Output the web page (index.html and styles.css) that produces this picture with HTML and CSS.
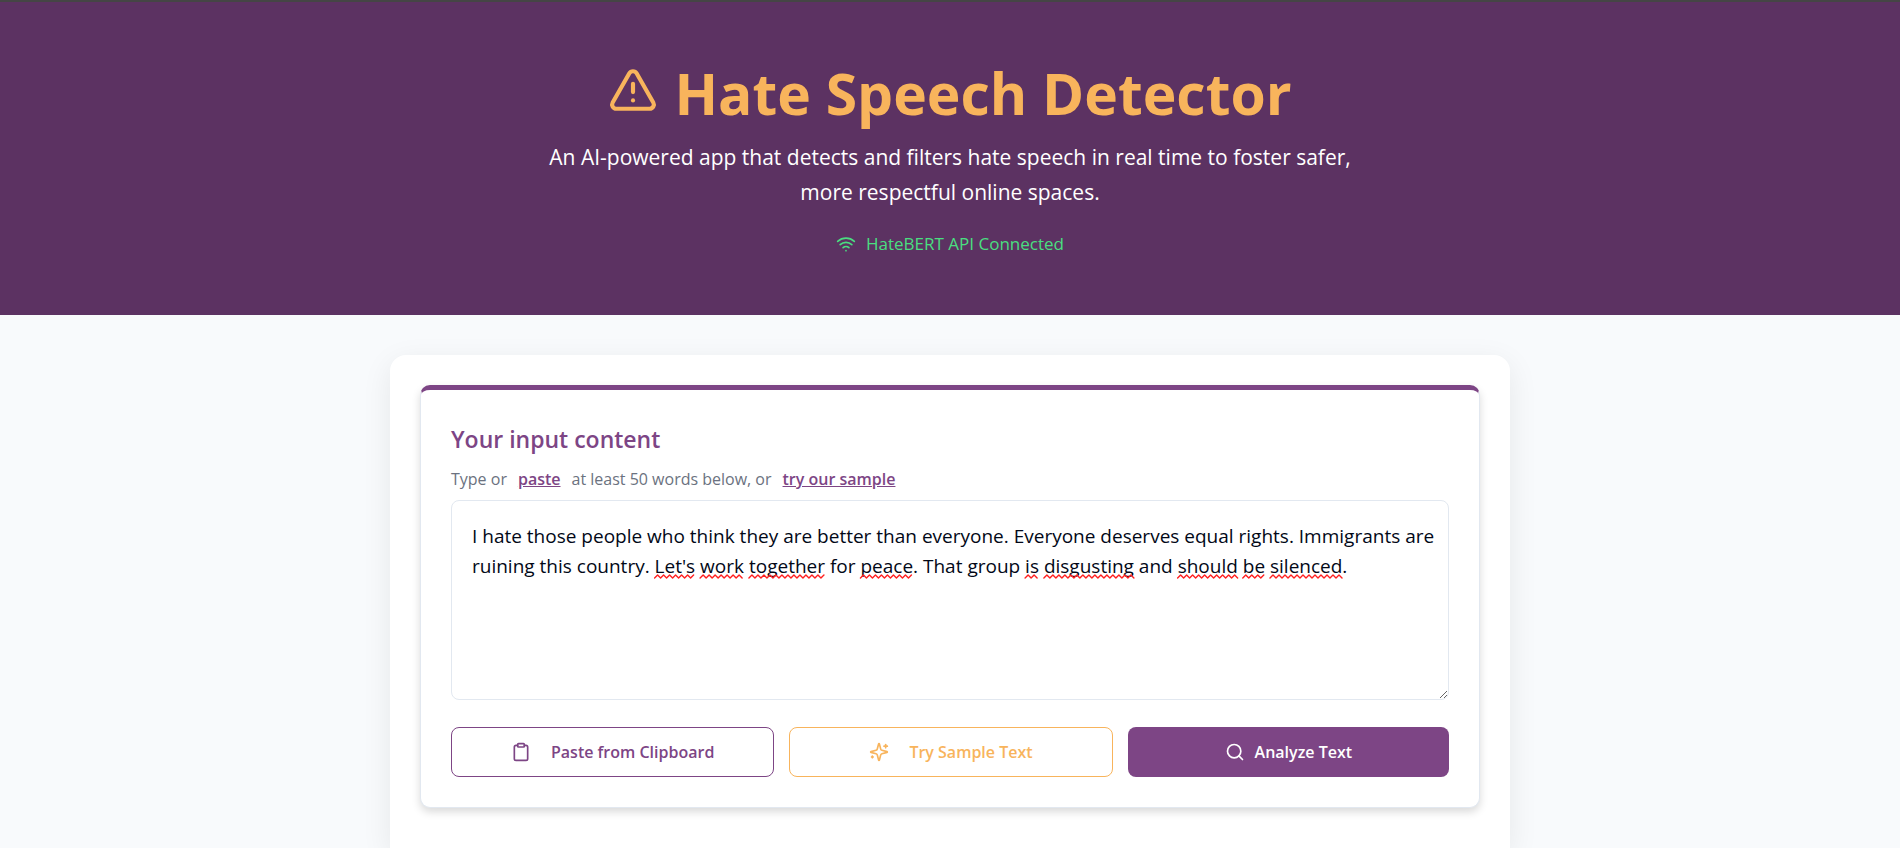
FILE: index.html
```html
<!DOCTYPE html>
<html lang="en">
<head>
<meta charset="utf-8">
<meta name="viewport" content="width=device-width, initial-scale=1">
<title>Hate Speech Detector</title>
<link rel="stylesheet" href="styles.css">
<script src="script.js" defer></script>
</head>
<body>
<header class="header">
  <h1 class="title">
    <svg class="title-icon" viewBox="0 0 24 24" aria-hidden="true"><path d="m21.73 18-8-14a2 2 0 0 0-3.48 0l-8 14A2 2 0 0 0 4 21h16a2 2 0 0 0 1.73-3"/><path d="M12 9v4"/><path d="M12 17h.01"/></svg>
    <span>Hate Speech Detector</span>
  </h1>
  <p class="subtitle">An AI-powered app that detects and filters hate speech in real time to foster safer, more respectful online spaces.</p>
  <p class="status">
    <svg class="status-icon" viewBox="0 0 24 24" aria-hidden="true"><path d="M12 20h.01"/><path d="M2 8.82a15 15 0 0 1 20 0"/><path d="M5 12.859a10 10 0 0 1 14 0"/><path d="M8.5 16.429a5 5 0 0 1 7 0"/></svg>
    <span>HateBERT API Connected</span>
  </p>
</header>
<main class="panel">
  <section class="card">
    <h2 class="card-title"><label for="content">Your input content</label></h2>
    <p class="hint"><span>Type or</span><a href="#paste">paste</a><span>at least 50 words below, or</span><a href="#sample">try our sample</a></p>
    <div class="editor">
      <textarea class="editor-input" id="content" spellcheck="false">I hate those people who think they are better than everyone. Everyone deserves equal rights. Immigrants are ruining this country. Let's work together for peace. That group is disgusting and should be silenced.</textarea>
      <svg class="squiggles" id="squiggles" aria-hidden="true"></svg>
    </div>
    <div class="actions">
      <button class="btn btn-paste" type="button" id="paste">
        <svg viewBox="0 0 24 24" aria-hidden="true"><rect x="8" y="2" width="8" height="4" rx="1"/><path d="M16 4h2a2 2 0 0 1 2 2v14a2 2 0 0 1-2 2H6a2 2 0 0 1-2-2V6a2 2 0 0 1 2-2h2"/></svg>
        <span>Paste from Clipboard</span>
      </button>
      <button class="btn btn-sample" type="button" id="sample">
        <svg viewBox="0 0 24 24" aria-hidden="true"><path d="M9.937 15.5A2 2 0 0 0 8.5 14.063l-6.135-1.582a.5.5 0 0 1 0-.962L8.5 9.936A2 2 0 0 0 9.937 8.5l1.582-6.135a.5.5 0 0 1 .963 0L14.063 8.5A2 2 0 0 0 15.5 9.937l6.135 1.581a.5.5 0 0 1 0 .964L15.5 14.063a2 2 0 0 0-1.437 1.437l-1.582 6.135a.5.5 0 0 1-.963 0z"/><path d="M20 3v4"/><path d="M22 5h-4"/><path d="M4 17v2"/><path d="M5 18H3"/></svg>
        <span>Try Sample Text</span>
      </button>
      <button class="btn btn-analyze" type="button">
        <svg viewBox="0 0 24 24" aria-hidden="true"><circle cx="11" cy="11" r="8"/><path d="m21 21-4.3-4.3"/></svg>
        <span>Analyze Text</span>
      </button>
    </div>
  </section>
</main>
</body>
</html>
```
FILE: styles.css
```css
* { box-sizing: border-box; }

body {
  margin: 0;
  background: #f8fafc;
  color: #020817;
  font-family: "Segoe UI", "Open Sans", "Noto Sans", sans-serif;
}

h1, h2, p { margin: 0; }

svg {
  flex: none;
  fill: none;
  stroke: currentColor;
  stroke-width: 2;
  stroke-linecap: round;
  stroke-linejoin: round;
}

.header {
  display: flex;
  flex-direction: column;
  align-items: center;
  padding: 58px 20px;
  border-top: 2px solid #454545;
  background: #5c3262;
  color: #fff;
  text-align: center;
}

.title {
  display: flex;
  gap: 16px;
  color: #f8b45c;
  font-size: 57px;
  font-weight: 700;
  line-height: 66px;
}

.title-icon { width: 50px; height: 50px; margin-top: 5px; }

.subtitle {
  max-width: 840px;
  margin-top: 14px;
  font-size: 21px;
  line-height: 35px;
}

.status {
  display: flex;
  align-items: center;
  gap: 10px;
  margin-top: 20px;
  color: #4ade80;
  font-size: 17px;
  line-height: 27px;
}

.status-icon { width: 20px; height: 20px; }

.panel {
  max-width: 1120px;
  margin: 40px auto 0;
  padding: 30px 30px 40px;
  border-radius: 16px 16px 0 0;
  background: #fff;
  box-shadow: 0 8px 30px rgba(0, 0, 0, 0.08);
}

.card {
  padding: 30px;
  border: 1px solid #e2e8f0;
  border-top: 5px solid #7d4585;
  border-radius: 10px;
  background: #fff;
  box-shadow: 0 4px 8px rgba(0, 0, 0, 0.15);
}

.card-title {
  color: #7d4585;
  font-size: 23px;
  font-weight: 600;
  line-height: 38px;
}

.hint {
  display: flex;
  gap: 11px;
  margin: 7px 0;
  color: #6b7280;
  font-size: 16px;
  line-height: 28px;
}

.hint a {
  color: #7d4585;
  font-weight: 600;
}

.editor { position: relative; }

.editor-input,
.editor-mirror {
  display: block;
  width: 100%;
  height: 200px;
  padding: 20px 12px 20px 20px;
  border: 1px solid #e2e8f0;
  border-radius: 8px;
  background: #fff;
  color: #020817;
  font: inherit;
  font-size: 19px;
  line-height: 30px;
  resize: vertical;
}

.editor-mirror {
  position: absolute;
  top: 0;
  left: 0;
  visibility: hidden;
  white-space: pre-wrap;
}

.squiggles {
  position: absolute;
  top: 0;
  left: 0;
  width: 100%;
  height: 100%;
  color: #ff1f1f;
  stroke-width: 1.4;
  pointer-events: none;
}

.actions {
  display: flex;
  gap: 15px;
  margin-top: 27px;
}

.btn {
  display: flex;
  flex: 1;
  align-items: center;
  justify-content: center;
  gap: 20px;
  height: 50px;
  border: 1px solid;
  border-radius: 8px;
  background: #fff;
  font: inherit;
  font-size: 16px;
  font-weight: 600;
}

.btn svg { width: 20px; height: 20px; }
.btn-paste { color: #7d4585; }
.btn-sample { color: #f8b45c; }

.btn-analyze {
  gap: 10px;
  border: 0;
  background: #7d4585;
  color: #fff;
}
```
FILE: script.js
```js
const input = document.getElementById("content");
const layer = document.getElementById("squiggles");
const flagged = /\b(?:Let's|work|together|peace|is|disgusting|should|be|silenced)\b/g;

// Builds a zigzag path from x to end, starting at the lower point.
function zigzag(x, end, y) {
  let d = `M${x} ${y + 3}`;
  let up = true;
  for (x += 3; x <= end; x += 3) {
    d += `L${x} ${up ? y : y + 3}`;
    up = !up;
  }
  return d;
}

// Underlines each flagged word, measured in a short-lived hidden copy of the field.
function drawSquiggles() {
  const mirror = document.createElement("div");
  mirror.className = "editor-mirror";
  mirror.textContent = input.value;
  input.parentNode.append(mirror);
  const origin = mirror.getBoundingClientRect();
  const range = document.createRange();
  let d = "";
  for (const match of input.value.matchAll(flagged)) {
    range.setStart(mirror.firstChild, match.index);
    range.setEnd(mirror.firstChild, match.index + match[0].length);
    const box = range.getBoundingClientRect();
    d += zigzag(box.left - origin.left, box.right - origin.left + 1, box.bottom - origin.top - 4);
  }
  mirror.remove();
  const path = document.createElementNS("http://www.w3.org/2000/svg", "path");
  path.setAttribute("d", d);
  layer.replaceChildren(path);
}

drawSquiggles();
input.addEventListener("input", drawSquiggles);
window.addEventListener("resize", drawSquiggles);
```
